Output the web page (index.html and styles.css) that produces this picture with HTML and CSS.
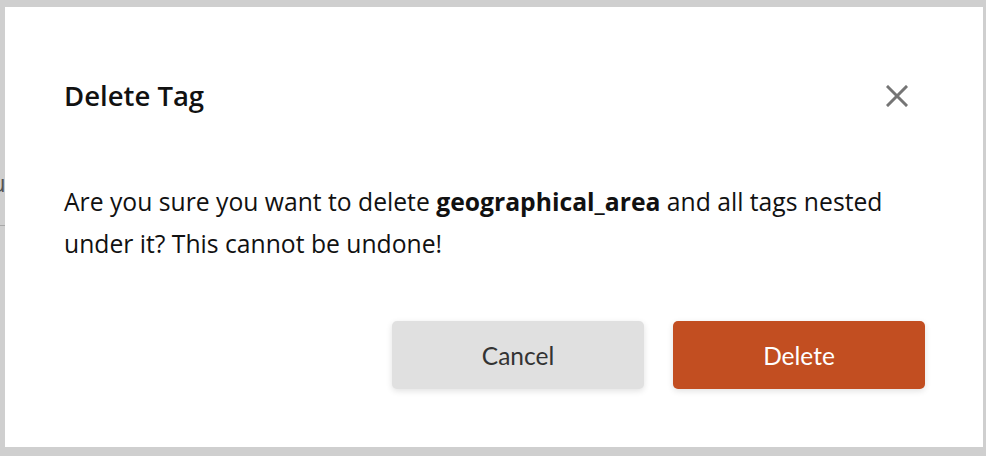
FILE: index.html
```html
<!DOCTYPE html>
<html lang="en">
<head>
	<meta charset="UTF-8">
	<title>Delete Tag</title>
	<link rel="stylesheet" href="styles.css">
</head>
<body>

	<div class="page">
		<span class="page-glyph">u</span>
		<div class="page-line"></div>
	</div>

	<div class="modal">
		<div class="modal-header">
			<h2>Delete Tag</h2>
			<button type="button" class="close" aria-label="Close">
				<svg width="22" height="22" viewBox="0 0 22 22">
					<path d="M2 2 L20 20 M20 2 L2 20" stroke="#757575" stroke-width="3" stroke-linecap="square"/>
				</svg>
			</button>
		</div>
		<p class="modal-text">
			Are you sure you want to delete <b>geographical_area</b> and all tags nested
			under it? This cannot be undone!
		</p>
		<div class="modal-actions">
			<button type="button" class="btn btn-cancel">Cancel</button>
			<button type="button" class="btn btn-delete">Delete</button>
		</div>
	</div>

</body>
</html>
```

FILE: styles.css
```css
* {
	box-sizing: border-box;
}
body {
	margin: 0;
	height: 456px;
	overflow: hidden;
	background-color: #cfcfcf;
	font-family: "Open Sans", sans-serif;
	color: #111;
}
.page {
	position: absolute;
	top: 0;
	left: 0;
	width: 100%;
	height: 100%;
}
.page-glyph {
	position: absolute;
	top: 166px;
	left: -9px;
	font-size: 24px;
	color: #555;
}
.page-line {
	position: absolute;
	top: 225px;
	left: 0;
	width: 5px;
	height: 1px;
	background-color: #a8a8a8;
}
.modal {
	position: relative;
	margin: 7px 3px 0 5px;
	height: 440px;
	padding: 0 58px 0 59px;
	background-color: #fff;
}
.modal-header {
	display: flex;
	align-items: center;
	justify-content: space-between;
	padding-top: 74px;
}
h2 {
	margin: 0;
	font-size: 27.5px;
	font-weight: 600;
	line-height: 30px;
}
.close {
	margin-right: 17px;
	padding: 0;
	border: none;
	background: none;
	display: block;
	width: 22px;
	height: 22px;
	cursor: pointer;
}
.close svg {
	display: block;
}
.modal-text {
	margin: 70px 0 0;
	font-size: 24.7px;
	line-height: 42px;
}
.modal-text b {
	font-weight: 700;
}
.modal-actions {
	display: flex;
	justify-content: flex-end;
	gap: 29px;
	margin-top: 56px;
}
.btn {
	width: 252px;
	height: 68px;
	border: none;
	border-radius: 5px;
	font-family: Lato, sans-serif;
	font-size: 24.5px;
	cursor: pointer;
	box-shadow: 0 2px 6px rgba(0, 0, 0, .12);
}
.btn-cancel {
	background-color: #e0e0e0;
	color: #333;
}
.btn-delete {
	background-color: #c24e21;
	color: #fff;
}
```
